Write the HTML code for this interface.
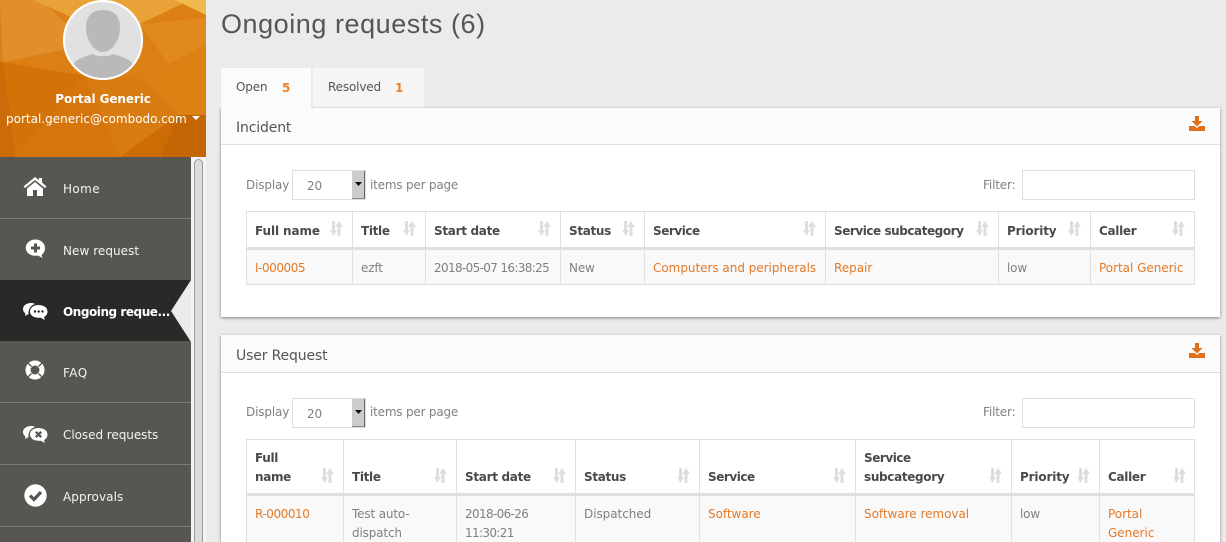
<!DOCTYPE html>
<html><head><meta charset="utf-8"><title>Ongoing requests</title>
<style>
html,body{margin:0;padding:0;overflow:hidden;width:1226px;height:542px}
body{position:relative;background:#ebebeb;font-family:"DejaVu Sans","Liberation Sans",sans-serif;font-size:12px;color:#808080}
div,span,svg{position:absolute}
.t{white-space:nowrap;line-height:20px;height:20px;letter-spacing:-.15px;margin-top:1px}
.h{font-weight:bold;color:#4a4a4a;font-size:12px;letter-spacing:-.33px}
.l{color:#e47a28;letter-spacing:-.03px}
.n{letter-spacing:-.65px}
.m{color:#f0f4f6;font-size:12px;left:63px;letter-spacing:.05px}
.sep{left:0;width:191px;height:1px;background:#7b7974}
.v{width:2px;background:#e0e0e0}
.hl{height:2px;background:#e0e0e0}
</style></head><body>
<svg width="0" height="0" style="left:0;top:0"><defs>
<symbol id="s" viewBox="0 0 13 15"><path d="M2 0h3v9h2l-3.500 6L0 9h2z M9 0l4 6h-2.500v9h-3V6H5z" fill="#dedede"/></symbol>
<symbol id="d" viewBox="0 0 16 16"><path d="M6 0h4v5h3.500L8 10.500 2.500 5H6z M0 10h5.500L8 12l2.500-2H16v5H0z" fill="#e0711a"/></symbol>
</defs></svg>

<div style="left:0;top:157px;width:191px;height:385px;background:#585650"></div>
<div style="left:191px;top:157px;width:15px;height:385px;background:#f4f4f4"></div>
<div style="left:194px;top:159px;width:7px;height:400px;background:#dcdcdc;border:1px solid #9a9a9a;border-radius:5px 5px 0 0"></div>

<svg style="left:0;top:0" width="206" height="157" viewBox="0 0 206 157">
<rect width="206" height="157" fill="#dc8016"/>
<polygon points="0,0 40,0 85,40 62,50 3,62" fill="#e28e2a"/>
<polygon points="33,0 190,0 140,24 100,30" fill="#e8a238"/>
<polygon points="175,0 206,0 206,15" fill="#f0b94e"/>
<polygon points="140,24 206,18 206,45 180,80" fill="#e08a1e"/>
<polygon points="3,62 85,76 15,157 0,157" fill="#d37209"/>
<polygon points="85,76 120,157 15,157" fill="#d6750c"/>
<polygon points="85,76 140,78 178,115 120,157" fill="#d87b10"/>
<polygon points="140,78 206,45 206,115 178,115" fill="#dc8215"/>
<polygon points="178,115 206,115 206,157 160,157" fill="#c56605"/>
<polygon points="120,157 178,115 160,157" fill="#cc6c05"/>
<polygon points="0,62 3,62 15,157 0,157" fill="#cb6c08"/>
</svg>
<svg style="left:62px;top:-1px" width="82" height="82" viewBox="0 0 82 82">
<defs><clipPath id="c"><circle cx="41" cy="41" r="38"/></clipPath></defs>
<circle cx="41" cy="41" r="39" fill="#e1e1e1" stroke="#fff" stroke-width="2.200"/>
<g clip-path="url(#c)" fill="#b9b9b9">
<path d="M41 11c11 0 17 6 17 18 0 12-8 24-17 24S24 41 24 29c0-12 6-18 17-18z"/>
<path d="M12 64c3-4 12-7 19-9 4 3 16 3 20 0 7 2 16 5 19 9l2 18H10z"/>
</g></svg>
<div class="t" style="left:0;width:206px;text-align:center;top:89px;color:#fff;font-weight:bold;font-size:12px;letter-spacing:-.1px;margin-top:0">Portal Generic</div>
<div class="t" style="left:6px;top:108px;color:#fff;font-size:12px;letter-spacing:0">portal.generic@combodo.com</div>
<svg style="left:192px;top:116px" width="9" height="5"><path d="M0 0h8L4 4z" fill="#fff"/></svg>

<div class="sep" style="top:218px"></div>
<div style="left:0;top:280px;width:191px;height:61px;background:#2a2928"></div>
<svg style="left:171px;top:280px" width="20" height="62"><path d="M20 0V62L0 31z" fill="#ebebeb"/></svg>
<div class="sep" style="top:402px"></div>
<div class="sep" style="top:464px"></div>
<div class="sep" style="top:526px"></div>

<svg style="left:23px;top:176px" width="24" height="20" viewBox="0 0 24 20"><path d="M12 1L.5 10.500l1.500 1.500L12 4l10 8 1.500-1.500L19 6.500V2h-3v2zM4 12.500V20h6v-6h4v6h6v-7.500L12 6z" fill="#fff"/></svg>
<div class="t m" style="top:178px;letter-spacing:.4px">Home</div>

<svg style="left:25px;top:239px" width="21" height="20" viewBox="0 0 21 20"><path d="M10.500 .5C15.500 .5 20 4 20 9c0 3-1.500 5.500-3.500 7l1 3-4.500-2.500c-1 .3-1.800.3-2.500.3C5 16.800 .8 13.500 .8 8.800 .8 4 5 .5 10.500 .5z" fill="#fff"/><path d="M9 4.500h3v3h3v3h-3v3H9v-3H6v-3h3z" fill="#585650"/></svg>
<div class="t m" style="top:240px">New request</div>

<svg style="left:23px;top:302px" width="25" height="19" viewBox="0 0 25 19"><path d="M8 1C3.500 1 0 3.500 0 7c0 2 1 3.500 2.500 4.500L2 14l3.500-2C5 8 7 3.500 12 2 11 1.300 9.500 1 8 1z" fill="#fff"/><path d="M15.500 3C20.500 3 24.500 5.500 24.500 9.500c0 2.500-1.500 4.500-3.500 5.500l.8 3-4-2.200h-2.300C10.500 15.800 7 13 7 9.500 7 5.500 11 3 15.500 3z" fill="#fff"/><g fill="#2a2928"><circle cx="12" cy="9.500" r="1.200"/><circle cx="15.700" cy="9.500" r="1.200"/><circle cx="19.400" cy="9.500" r="1.200"/></g></svg>
<div class="t" style="left:63px;top:301px;color:#fff;font-weight:bold;font-size:12px;letter-spacing:-.45px">Ongoing reque...</div>

<svg style="left:25px;top:360px" width="20" height="20" viewBox="0 0 20 20"><circle cx="10" cy="10" r="7.300" fill="none" stroke="#fff" stroke-width="4.400"/><circle cx="10" cy="10" r="5" fill="none" stroke="#fff" stroke-width="1"/><g stroke="#585650" stroke-width="1.300"><path d="M3 3l3.500 3.500M17 3l-3.500 3.500M3 17l3.500-3.500M17 17l-3.500-3.500"/></g></svg>
<div class="t m" style="top:362px;letter-spacing:.5px">FAQ</div>

<svg style="left:23px;top:425px" width="25" height="19" viewBox="0 0 25 19"><path d="M8 1C3.500 1 0 3.500 0 7c0 2 1 3.500 2.500 4.500L2 14l3.500-2C5 8 7 3.500 12 2 11 1.300 9.500 1 8 1z" fill="#fff"/><path d="M15.500 3C20.500 3 24.500 5.500 24.500 9.500c0 2.500-1.500 4.500-3.500 5.500l.8 3-4-2.200h-2.300C10.500 15.800 7 13 7 9.500 7 5.500 11 3 15.500 3z" fill="#fff"/><path d="M12.800 6.800l5.400 5.400M18.200 6.800l-5.400 5.400" stroke="#585650" stroke-width="2.300"/></svg>
<div class="t m" style="top:424px;letter-spacing:-.05px">Closed requests</div>

<svg style="left:24px;top:484px" width="23" height="23" viewBox="0 0 23 23"><circle cx="11.500" cy="11.500" r="11.200" fill="#fff"/><path d="M6 11.500l4 4 7-7.500" fill="none" stroke="#585650" stroke-width="3.200"/></svg>
<div class="t m" style="top:486px;letter-spacing:.1px">Approvals</div>

<div class="t" style="left:221px;top:8px;height:32px;line-height:32px;font-size:27px;color:#555;font-family:'Liberation Sans',sans-serif;letter-spacing:.55px;margin-top:0">Ongoing requests (6)</div>

<div style="left:313px;top:68px;width:111px;height:40px;background:#f5f5f5"></div>

<!-- Card 1 -->
<div style="left:221px;top:108px;width:999px;height:209px;background:#fff;box-shadow:0 1px 3px rgba(0,0,0,.45)"></div>
<div style="left:221px;top:108px;width:999px;height:36px;background:#fbfbfb;border-bottom:1px solid #dedede"></div>
<div style="left:221px;top:68px;width:90px;height:42px;background:#fbfbfb"></div>
<div class="t" style="left:236px;top:76px;color:#555">Open</div>
<div class="t" style="left:282px;top:77px;color:#ee8128;font-weight:bold">5</div>
<div class="t" style="left:328px;top:76px;color:#555">Resolved</div>
<div class="t" style="left:395px;top:77px;color:#ee8128;font-weight:bold">1</div>
<div class="t" style="left:236px;top:117px;font-size:14px;color:#555">Incident</div>
<svg style="left:1189px;top:116px" width="16" height="16"><use href="#d"/></svg>

<div class="t" style="left:246px;top:174px">Display</div>
<div style="left:292px;top:170px;width:72px;height:28px;background:#fff;border:1px solid #dedede"></div>
<div class="t" style="left:307px;top:175px">20</div>
<div style="left:352px;top:171px;width:13px;height:28px;background:#ccc;border-right:1px solid #666;border-bottom:1px solid #888;box-sizing:border-box"></div>
<svg style="left:355px;top:182px" width="8" height="5"><path d="M0 0h7L3.500 4z" fill="#111"/></svg>
<div class="t" style="left:370px;top:174px;letter-spacing:-.2px">items per page</div>
<div class="t" style="left:983px;top:174px">Filter:</div>
<div style="left:1022px;top:170px;width:171px;height:28px;background:#fff;border:1px solid #dedede"></div>

<div style="left:246px;top:211px;width:949px;height:74px;background:#fff;box-sizing:border-box;border:1px solid #e0e0e0"></div>
<div style="left:247px;top:250px;width:947px;height:34px;background:#f9f9f9"></div>
<div class="hl" style="left:247px;top:247px;width:947px;height:3px"></div>
<div class="v" style="left:352px;top:212px;height:72px;width:1px"></div>
<div class="v" style="left:425px;top:212px;height:72px;width:1px"></div>
<div class="v" style="left:560px;top:212px;height:72px;width:1px"></div>
<div class="v" style="left:644px;top:212px;height:72px;width:1px"></div>
<div class="v" style="left:825px;top:212px;height:72px;width:1px"></div>
<div class="v" style="left:998px;top:212px;height:72px;width:1px"></div>
<div class="v" style="left:1090px;top:212px;height:72px;width:1px"></div>

<div class="t h" style="left:255px;top:220px;letter-spacing:-.1px">Full name</div>
<div class="t h" style="left:361px;top:220px">Title</div>
<div class="t h" style="left:434px;top:220px;letter-spacing:-.3px">Start date</div>
<div class="t h" style="left:569px;top:220px">Status</div>
<div class="t h" style="left:653px;top:220px;letter-spacing:-.45px">Service</div>
<div class="t h" style="left:834px;top:220px;letter-spacing:-.45px">Service subcategory</div>
<div class="t h" style="left:1007px;top:220px;letter-spacing:-.15px">Priority</div>
<div class="t h" style="left:1099px;top:220px;letter-spacing:-.3px">Caller</div>
<svg style="left:330px;top:221px" width="13" height="15"><use href="#s"/></svg>
<svg style="left:403px;top:221px" width="13" height="15"><use href="#s"/></svg>
<svg style="left:538px;top:221px" width="13" height="15"><use href="#s"/></svg>
<svg style="left:622px;top:221px" width="13" height="15"><use href="#s"/></svg>
<svg style="left:803px;top:221px" width="13" height="15"><use href="#s"/></svg>
<svg style="left:976px;top:221px" width="13" height="15"><use href="#s"/></svg>
<svg style="left:1068px;top:221px" width="13" height="15"><use href="#s"/></svg>
<svg style="left:1172px;top:221px" width="13" height="15"><use href="#s"/></svg>

<div class="t l n" style="left:255px;top:257px;letter-spacing:-.45px">I-000005</div>
<div class="t" style="left:361px;top:257px">ezft</div>
<div class="t n" style="left:434px;top:257px">2018-05-07 16:38:25</div>
<div class="t" style="left:569px;top:257px">New</div>
<div class="t l" style="left:653px;top:257px">Computers and peripherals</div>
<div class="t l" style="left:834px;top:257px">Repair</div>
<div class="t" style="left:1007px;top:257px">low</div>
<div class="t l" style="left:1099px;top:257px">Portal Generic</div>

<!-- Card 2 -->
<div style="left:221px;top:335px;width:999px;height:220px;background:#fff;box-shadow:0 1px 3px rgba(0,0,0,.45)"></div>
<div style="left:221px;top:335px;width:999px;height:37px;background:#fbfbfb;border-bottom:1px solid #dedede"></div>
<div class="t" style="left:236px;top:345px;font-size:14px;color:#555">User Request</div>
<svg style="left:1189px;top:343px" width="16" height="16"><use href="#d"/></svg>

<div class="t" style="left:246px;top:401px">Display</div>
<div style="left:292px;top:398px;width:72px;height:28px;background:#fff;border:1px solid #dedede"></div>
<div class="t" style="left:307px;top:403px">20</div>
<div style="left:352px;top:399px;width:13px;height:28px;background:#ccc;border-right:1px solid #666;border-bottom:1px solid #888;box-sizing:border-box"></div>
<svg style="left:355px;top:410px" width="8" height="5"><path d="M0 0h7L3.500 4z" fill="#111"/></svg>
<div class="t" style="left:370px;top:401px;letter-spacing:-.2px">items per page</div>
<div class="t" style="left:983px;top:401px">Filter:</div>
<div style="left:1022px;top:398px;width:171px;height:28px;background:#fff;border:1px solid #dedede"></div>

<div style="left:246px;top:439px;width:949px;height:110px;background:#fff;box-sizing:border-box;border:1px solid #e0e0e0"></div>
<div style="left:247px;top:496px;width:947px;height:52px;background:#f9f9f9"></div>
<div class="hl" style="left:247px;top:493px;width:947px;height:3px"></div>
<div class="v" style="left:343px;top:440px;height:108px;width:1px"></div>
<div class="v" style="left:456px;top:440px;height:108px;width:1px"></div>
<div class="v" style="left:575px;top:440px;height:108px;width:1px"></div>
<div class="v" style="left:699px;top:440px;height:108px;width:1px"></div>
<div class="v" style="left:855px;top:440px;height:108px;width:1px"></div>
<div class="v" style="left:1011px;top:440px;height:108px;width:1px"></div>
<div class="v" style="left:1099px;top:440px;height:108px;width:1px"></div>

<div class="t h" style="left:255px;top:447px">Full</div>
<div class="t h" style="left:255px;top:466px">name</div>
<div class="t h" style="left:352px;top:466px">Title</div>
<div class="t h" style="left:465px;top:466px;letter-spacing:-.3px">Start date</div>
<div class="t h" style="left:584px;top:466px">Status</div>
<div class="t h" style="left:708px;top:466px;letter-spacing:-.45px">Service</div>
<div class="t h" style="left:864px;top:447px;letter-spacing:-.45px">Service</div>
<div class="t h" style="left:864px;top:466px">subcategory</div>
<div class="t h" style="left:1020px;top:466px;letter-spacing:-.15px">Priority</div>
<div class="t h" style="left:1108px;top:466px;letter-spacing:-.3px">Caller</div>
<svg style="left:321px;top:468px" width="13" height="15"><use href="#s"/></svg>
<svg style="left:434px;top:468px" width="13" height="15"><use href="#s"/></svg>
<svg style="left:553px;top:468px" width="13" height="15"><use href="#s"/></svg>
<svg style="left:677px;top:468px" width="13" height="15"><use href="#s"/></svg>
<svg style="left:833px;top:468px" width="13" height="15"><use href="#s"/></svg>
<svg style="left:989px;top:468px" width="13" height="15"><use href="#s"/></svg>
<svg style="left:1077px;top:468px" width="13" height="15"><use href="#s"/></svg>
<svg style="left:1173px;top:468px" width="13" height="15"><use href="#s"/></svg>

<div class="t l n" style="left:255px;top:503px;letter-spacing:-.45px">R-000010</div>
<div class="t" style="left:352px;top:503px">Test auto-</div>
<div class="t" style="left:352px;top:522px">dispatch</div>
<div class="t n" style="left:465px;top:503px">2018-06-26</div>
<div class="t n" style="left:465px;top:522px">11:30:21</div>
<div class="t" style="left:584px;top:503px;letter-spacing:-.05px">Dispatched</div>
<div class="t l" style="left:708px;top:503px">Software</div>
<div class="t l" style="left:864px;top:503px">Software removal</div>
<div class="t" style="left:1020px;top:503px">low</div>
<div class="t l" style="left:1108px;top:503px">Portal</div>
<div class="t l" style="left:1108px;top:522px">Generic</div>
</body></html>
